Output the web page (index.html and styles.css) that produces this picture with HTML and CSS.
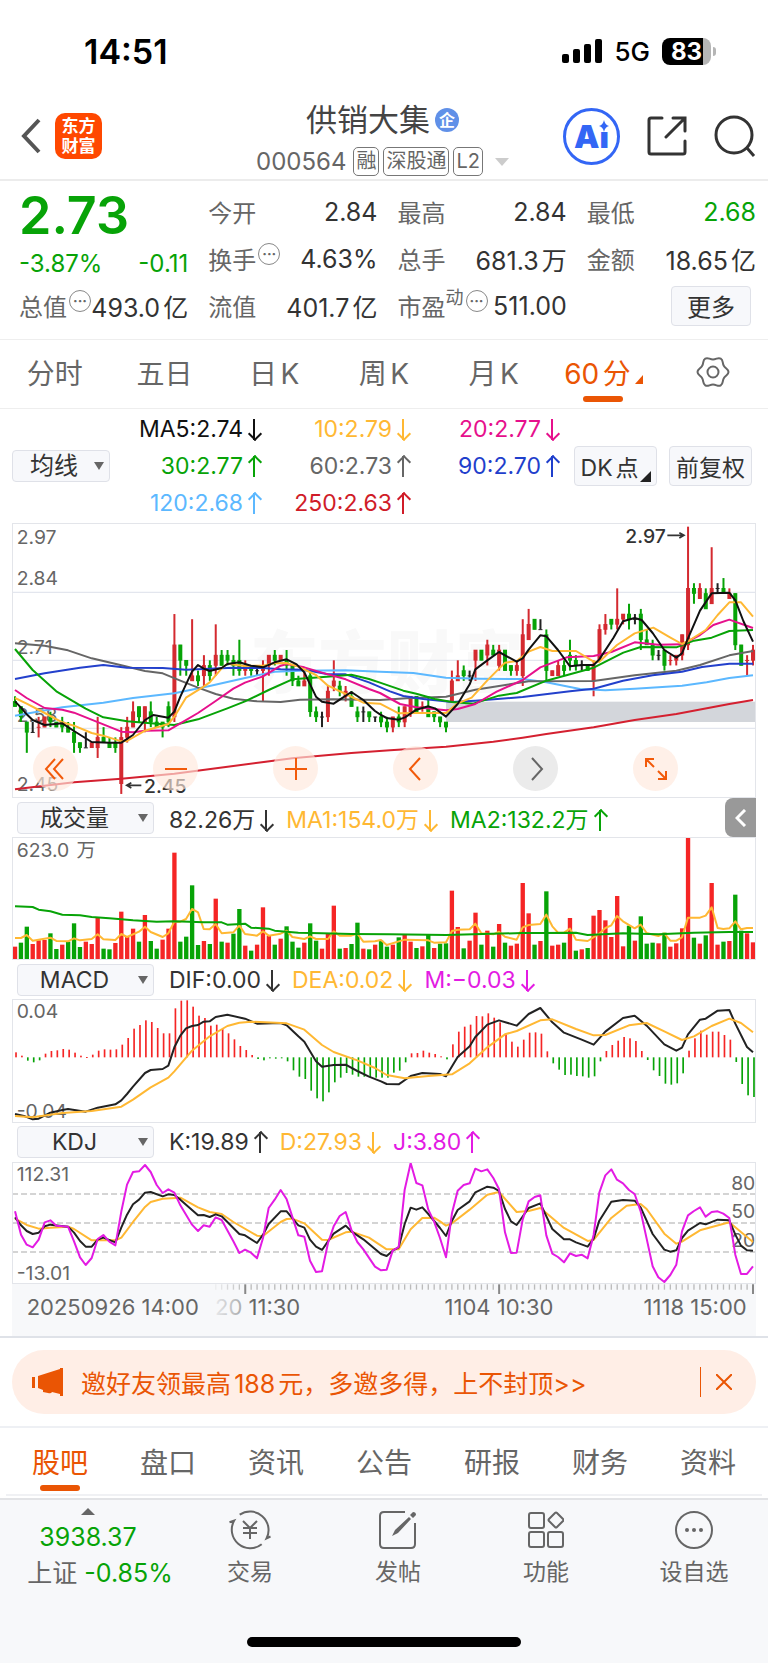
FILE: index.html
```html
<!DOCTYPE html>
<html lang="zh-CN">
<head>
    <meta charset="UTF-8">
    <meta name="viewport" content="width=device-width, initial-scale=1.0">
    <title>供销大集 000564</title>
    <link rel="stylesheet" href="styles.css">
</head>
<body>
    <div class="status-bar">
        <span class="clock">14:51</span>
        <div class="status-right">
            <svg width="40" height="26" viewBox="0 0 40 26">
                <rect x="0" y="16" width="7" height="9" rx="2"/>
                <rect x="11" y="11" width="7" height="14" rx="2"/>
                <rect x="22" y="6" width="7" height="19" rx="2"/>
                <rect x="33" y="1" width="7" height="24" rx="2"/>
            </svg>
            <span class="network">5G</span>
            <div class="battery"><span>83</span></div>
        </div>
    </div>

    <header class="header">
        <div class="header-left">
            <button class="icon-btn" aria-label="返回">
                <svg width="22" height="36" viewBox="0 0 22 36" fill="none" stroke="#555" stroke-width="4"><path d="M19 2L4 18L19 34"/></svg>
            </button>
            <a class="logo" href="#"><span>东方</span><span>财富</span></a>
        </div>
        <div class="header-title">
            <h1>供销大集<span class="badge">企</span></h1>
            <div class="code">
                <span class="code-num">000564</span>
                <span class="tag">融</span>
                <span class="tag">深股通</span>
                <span class="tag">L2</span>
                <svg class="code-arrow" width="14" height="8" viewBox="0 0 14 8"><path d="M0 0H14L7 8Z" fill="#ccc"/></svg>
            </div>
        </div>
        <div class="header-right">
            <button class="ai-btn">Ai<svg width="10" height="12" viewBox="0 0 10 12"><path d="M5 0Q6 5 10 6Q6 7 5 12Q4 7 0 6Q4 5 5 0Z" fill="#3366f5"/></svg></button>
            <button class="icon-btn" aria-label="分享">
                <svg width="40" height="42" viewBox="0 0 40 42" fill="none" stroke="#333" stroke-width="3" stroke-linecap="round"><path d="M15 3H4Q2 3 2 5V37Q2 39 4 39H36Q38 39 38 37V26"/><path d="M26 3H38V16M38 3L19 22"/></svg>
            </button>
            <button class="icon-btn" aria-label="搜索">
                <svg width="42" height="42" viewBox="0 0 42 42" fill="none" stroke="#333" stroke-width="3"><circle cx="20" cy="20" r="18"/><path d="M33 33L40 41"/></svg>
            </button>
        </div>
    </header>

    <section class="quote">
        <div class="quote-col">
            <div class="price">2.73</div>
            <div class="change"><span>-3.87%</span><span>-0.11</span></div>
            <div class="row"><label>总值<i class="more-dot">···</i></label><b>493.0亿</b></div>
        </div>
        <div class="quote-col">
            <div class="row"><label>今开</label><b>2.84</b></div>
            <div class="row"><label>换手<i class="more-dot">···</i></label><b>4.63%</b></div>
            <div class="row"><label>流值</label><b>401.7亿</b></div>
        </div>
        <div class="quote-col">
            <div class="row"><label>最高</label><b>2.84</b></div>
            <div class="row"><label>总手</label><b>681.3万</b></div>
            <div class="row"><label>市盈<sup>动</sup><i class="more-dot">···</i></label><b>511.00</b></div>
        </div>
        <div class="quote-col">
            <div class="row"><label>最低</label><b class="green">2.68</b></div>
            <div class="row"><label>金额</label><b>18.65亿</b></div>
            <div class="row end"><button class="box-btn more-btn">更多</button></div>
        </div>
    </section>

    <nav class="period-tabs">
        <button>分时</button>
        <button>五日</button>
        <button>日K</button>
        <button>周K</button>
        <button>月K</button>
        <button class="active">60分<svg class="corner" width="8" height="9" viewBox="0 0 8 9"><path d="M8 0V9H0Z" fill="#ea5504"/></svg></button>
        <button aria-label="设置">
            <svg class="gear" width="34" height="34" viewBox="0 0 34 34" fill="none" stroke="#666" stroke-width="2"><path d="M17 4.5C20.5 4.5 22 2 24.75 3.6C27.5 5.2 26.1 7.7 27.8 10.75C29.5 13.8 32.5 13.8 32.5 17C32.5 20.2 29.5 20.2 27.8 23.25C26.1 26.3 27.5 28.8 24.75 30.4C22 32 20.5 29.5 17 29.5C13.5 29.5 12 32 9.25 30.4C6.5 28.8 7.9 26.3 6.2 23.25C4.5 20.2 1.5 20.2 1.5 17C1.5 13.8 4.5 13.8 6.2 10.75C7.9 7.7 6.5 5.2 9.25 3.6C12 2 13.5 4.5 17 4.5Z"/><circle cx="17" cy="17" r="5.5"/></svg>
        </button>
    </nav>

    <section class="ma-bar">
        <div class="select small">
            <select aria-label="主图指标"><option>均线</option></select>
        </div>
        <div class="ma-values">
            <span class="c-black">MA5:2.74<i class="dn"></i></span>
            <span class="c-orange">10:2.79<i class="dn"></i></span>
            <span class="c-pink">20:2.77<i class="dn"></i></span>
            <span class="c-green">30:2.77<i class="up"></i></span>
            <span class="c-gray">60:2.73<i class="up"></i></span>
            <span class="c-blue">90:2.70<i class="up"></i></span>
            <span class="c-sky">120:2.68<i class="up"></i></span>
            <span class="c-red">250:2.63<i class="up"></i></span>
        </div>
        <div class="ma-buttons">
            <button class="box-btn dk">DK点</button>
            <button class="box-btn">前复权</button>
        </div>
    </section>

    <main class="charts">
        <div class="chart">
            <svg id="price" viewBox="36 24 2232 825"></svg>
            <div class="tools">
                <button aria-label="最左"><svg width="24" height="24" viewBox="0 0 24 24"><path d="M11 2L2 12L11 22M19 2L10 12L19 22"/></svg></button>
                <button aria-label="缩小"><svg width="24" height="24" viewBox="0 0 24 24"><path d="M1 12H23"/></svg></button>
                <button aria-label="放大"><svg width="24" height="24" viewBox="0 0 24 24"><path d="M1 12H23M12 1V23"/></svg></button>
                <button aria-label="左移"><svg width="24" height="24" viewBox="0 0 24 24"><path d="M16 1L6 12L16 23"/></svg></button>
                <button class="off" aria-label="右移"><svg width="24" height="24" viewBox="0 0 24 24"><path d="M8 1L18 12L8 23"/></svg></button>
                <button aria-label="全屏"><svg width="24" height="24" viewBox="0 0 24 24"><path d="M2 10V2H10M2 2L10 10M22 14V22H14M22 22L14 14"/></svg></button>
            </div>
        </div>

        <div class="ind-head">
            <div class="select"><select aria-label="副图一"><option>成交量</option></select></div>
            <span class="c-dark">82.26万<i class="dn"></i></span>
            <span class="c-orange">MA1:154.0万<i class="dn"></i></span>
            <span class="c-green">MA2:132.2万<i class="up"></i></span>
            <button class="side-tab" aria-label="展开"><svg width="12" height="18" viewBox="0 0 12 18" fill="none" stroke="#fff" stroke-width="3"><path d="M10 1L2 9L10 17"/></svg></button>
        </div>
        <div class="chart"><svg id="volume" viewBox="36 124 2232 370"></svg></div>

        <div class="ind-head">
            <div class="select"><select aria-label="副图二"><option>MACD</option></select></div>
            <span class="c-dark">DIF:0.00<i class="dn"></i></span>
            <span class="c-orange">DEA:0.02<i class="dn"></i></span>
            <span class="c-violet">M:−0.03<i class="dn"></i></span>
        </div>
        <div class="chart"><svg id="macd" viewBox="36 610 2232 370"></svg></div>

        <div class="ind-head">
            <div class="select"><select aria-label="副图三"><option>KDJ</option></select></div>
            <span class="c-dark">K:19.89<i class="up"></i></span>
            <span class="c-orange">D:27.93<i class="dn"></i></span>
            <span class="c-violet">J:3.80<i class="up"></i></span>
        </div>
        <div class="chart kdj"><svg id="kdj" viewBox="36 122 2232 368"></svg></div>
        <div class="axis"><svg id="axis" viewBox="36 490 2232 156"></svg></div>
    </main>

    <div class="promo-wrap">
        <div class="promo">
            <svg width="32" height="28" viewBox="0 0 32 28" fill="#ea5504"><path d="M0 9H3V20H0Z"/><path d="M6 8L28 1V0H31V28H28V26L20 24Q19 26 16 25L11 24V22L6 20Z"/></svg>
            <a href="#">邀好友领最高188元，多邀多得，上不封顶&gt;&gt;</a>
            <button class="icon-btn" aria-label="关闭"><svg width="16" height="16" viewBox="0 0 16 16" fill="none" stroke="#ea5504" stroke-width="2"><path d="M0 0L16 16M16 0L0 16"/></svg></button>
        </div>
    </div>

    <nav class="info-tabs">
        <button class="active">股吧</button>
        <button>盘口</button>
        <button>资讯</button>
        <button>公告</button>
        <button>研报</button>
        <button>财务</button>
        <button>资料</button>
    </nav>

    <footer class="bottom">
        <div class="bottom-nav">
            <a class="index" href="#">
                <svg width="14" height="7" viewBox="0 0 14 7"><path d="M7 0L14 7H0Z"/></svg>
                <span class="green">3938.37</span>
                <span class="index-name">上证 <em>-0.85%</em></span>
            </a>
            <a href="#">
                <svg width="42" height="40" viewBox="0 0 42 40"><path d="M10.7 4.7A18.5 18.5 0 0 1 37.6 28.3L41.5 26.5"/><path d="M32.7 34.3A18.5 18.5 0 0 1 5.2 10.6L0.5 12.3"/><path d="M14 11L21 18L28 11M21 18V29M14 18H28M14 23H28"/></svg>
                <span>交易</span>
            </a>
            <a href="#">
                <svg width="40" height="40" viewBox="0 0 40 40"><path d="M27 2H6Q2 2 2 6V34Q2 38 6 38H33Q37 38 37 34V13"/><path class="solid" d="M31 7L33 9L20 23L14 26L17 20ZM32 5L35 2Q38 2 38 5L35 8Z"/></svg>
                <span>发帖</span>
            </a>
            <a href="#">
                <svg width="36" height="38" viewBox="0 0 36 38"><rect x="1" y="2" width="15" height="15" rx="2"/><rect x="1" y="21" width="15" height="15" rx="2"/><rect x="20" y="21" width="15" height="15" rx="2"/><path d="M27 2Q28 1 29 2L35 8Q36 9 35 10L29 16Q28 17 27 16L21 10Q20 9 21 8Z"/></svg>
                <span>功能</span>
            </a>
            <a href="#">
                <svg width="38" height="38" viewBox="0 0 38 38"><circle cx="19" cy="19" r="18"/><g class="solid"><circle cx="12" cy="19" r="2"/><circle cx="19" cy="19" r="2"/><circle cx="26" cy="19" r="2"/></g></svg>
                <span>设自选</span>
            </a>
        </div>
        <div class="home-bar"></div>
    </footer>

    <script src="charts.js"></script>
</body>
</html>
```

FILE: styles.css
```css
* {
    box-sizing: border-box;
}
body {
    display: flex;
    flex-direction: column;
    min-height: 100vh;
    margin: 0;
    background: #fff;
    color: #333;
    font-family: Inter, "Noto Sans CJK SC", sans-serif;
    font-size: 24px;
    text-autospace: normal;
}
button, select {
    font: inherit;
    color: inherit;
    border: 0;
    padding: 0;
    margin: 0;
    background: none;
}
a {
    color: inherit;
    text-decoration: none;
}
svg {
    display: block;
}
i, em {
    font-style: normal;
}
.green, em {
    color: #07a307;
}

/* status bar */
.status-bar {
    display: flex;
    justify-content: space-between;
    align-items: center;
    height: 102px;
    padding: 0 57px 0 84px;
    color: #000;
}
.clock {
    font-size: 34px;
    font-weight: 600;
}
.status-right {
    display: flex;
    align-items: center;
    gap: 12px;
}
.network {
    font-size: 26px;
    font-weight: 500;
}
.battery {
    position: relative;
    width: 49px;
    height: 27px;
    border-radius: 8px;
    background: linear-gradient(90deg, #000 83%, #b5b5b5 83%);
    color: #fff;
    font-size: 24px;
    font-weight: 700;
    line-height: 27px;
    text-align: center;
}
.battery::after {
    content: "";
    position: absolute;
    right: -5px;
    top: 9px;
    width: 3px;
    height: 9px;
    border-radius: 0 4px 4px 0;
    background: #b5b5b5;
}

/* header */
.header {
    display: grid;
    grid-template-columns: 1fr auto 1fr;
    align-items: center;
    height: 79px;
    padding: 0 12px 10px 20px;
    border-bottom: 2px solid #ececec;
}
.header-left, .header-right {
    display: flex;
    align-items: center;
    padding-bottom: 6px;
}
.header-left {
    gap: 13px;
}
.header-right {
    justify-content: flex-end;
    gap: 27px;
}
.logo {
    display: flex;
    flex-direction: column;
    justify-content: center;
    align-items: center;
    width: 47px;
    height: 46px;
    border-radius: 10px;
    background: #ff4800;
    color: #fff;
    font-size: 17px;
    font-weight: 700;
    line-height: 20px;
}
.header-title {
    padding-right: 11px;
}
.header-title h1 {
    display: flex;
    justify-content: center;
    align-items: center;
    gap: 5px;
    margin: 0;
    font-size: 31px;
    font-weight: 400;
    line-height: 36px;
    color: #444;
}
.badge {
    width: 24px;
    height: 24px;
    border-radius: 50%;
    background: #6090e8;
    color: #fff;
    font-size: 16px;
    font-weight: 700;
    line-height: 24px;
    text-align: center;
}
.code {
    display: flex;
    align-items: center;
    gap: 4px;
    margin-top: 9px;
    color: #666;
}
.code-num {
    margin-right: 3px;
}
.tag {
    height: 29px;
    padding: 0 2px;
    border: 1px solid #777;
    border-radius: 5px;
    font-size: 20px;
    line-height: 27px;
}
.code-arrow {
    margin-left: 8px;
}
.ai-btn {
    position: relative;
    width: 57px;
    height: 57px;
    border: 3px solid #3366f5;
    border-radius: 50%;
    color: #3366f5;
    font-size: 32px;
    font-weight: 900;
    line-height: 51px;
}
.ai-btn svg {
    position: absolute;
    right: 8px;
    top: 9px;
    background: #fff;
}

/* quote */
.quote {
    display: grid;
    grid-template-columns: repeat(4, minmax(0, 1fr));
    gap: 20px;
    padding: 7px 12px 10px 19px;
    border-bottom: 1px solid #eee;
}
.row, .change {
    display: flex;
    justify-content: space-between;
    align-items: center;
    height: 47px;
    white-space: nowrap;
}
.row label {
    display: flex;
    align-items: center;
    color: #666;
}
.row b {
    font-size: 25px;
    font-weight: 400;
}
.row.end {
    justify-content: flex-end;
}
.row sup {
    align-self: flex-start;
    font-size: 18px;
    line-height: 20px;
}
.price {
    height: 56px;
    color: #07a307;
    font-size: 52px;
    font-weight: 600;
    line-height: 56px;
}
.change {
    height: 38px;
    color: #07a307;
}
.more-dot {
    align-self: flex-start;
    width: 22px;
    height: 22px;
    margin: 2px 0 0 2px;
    border: 1px solid #888;
    border-radius: 50%;
    font-size: 14px;
    font-weight: 700;
    line-height: 19px;
    text-align: center;
}
.box-btn {
    height: 40px;
    border: 1px solid #dfe1e8;
    border-radius: 4px;
    background: #f7f8fb;
}
.more-btn {
    width: 80px;
    margin-right: 5px;
}

/* period tabs */
.period-tabs {
    display: grid;
    grid-template-columns: repeat(7, 1fr);
    height: 69px;
    border-bottom: 1px solid #eee;
    color: #666;
    font-size: 28px;
}
.period-tabs button {
    padding-bottom: 4px;
}
.period-tabs button, .info-tabs button {
    position: relative;
    height: 100%;
}
.period-tabs .active, .info-tabs .active {
    color: #ea5504;
}
.active::after {
    content: "";
    position: absolute;
    left: 50%;
    bottom: 6px;
    width: 40px;
    height: 6px;
    margin-left: -20px;
    border-radius: 3px;
    background: #ea5504;
}
.info-tabs .active::after {
    bottom: 3px;
}
.corner {
    display: inline-block;
    margin-left: 4px;
}
.gear {
    margin: 0 auto;
}

/* moving averages */
.ma-bar {
    display: flex;
    align-items: center;
    height: 114px;
    padding: 0 16px 0 12px;
}
.select {
    position: relative;
    width: 137px;
}
.select.small {
    width: 98px;
}
.select select {
    width: 100%;
    height: 32px;
    padding-right: 22px;
    border: 1px solid #dfe1e8;
    border-radius: 4px;
    background: #f7f8fb;
    appearance: none;
    text-align-last: center;
    line-height: 30px;
}
.select.small select {
    padding-right: 14px;
}
.select::after {
    content: "";
    position: absolute;
    right: 6px;
    top: 12px;
    border: 5px solid transparent;
    border-top: 8px solid #666;
    border-bottom: 0;
}
.ma-values {
    flex: 1;
    display: grid;
    grid-template-columns: repeat(3, 1fr);
    font-size: 23px;
    line-height: 37px;
    text-align: right;
}
.ma-buttons {
    display: flex;
    gap: 12px;
    margin-left: 17px;
}
.ma-buttons .box-btn {
    width: 83px;
    font-size: 23px;
}
.dk {
    position: relative;
    padding-right: 12px;
}
.dk::after {
    content: "";
    position: absolute;
    right: 5px;
    bottom: 3px;
    border-left: 11px solid transparent;
    border-bottom: 11px solid #222;
}

/* thin arrows after the values */
.up, .dn {
    display: inline-block;
    position: relative;
    width: 10px;
    height: 21px;
    margin-left: 6px;
    vertical-align: -3px;
    background: linear-gradient(currentColor, currentColor) center / 2px 100% no-repeat;
}
.up::after, .dn::after {
    content: "";
    position: absolute;
    left: 1px;
    width: 8px;
    height: 8px;
    border: solid currentColor;
    transform: rotate(45deg);
}
.up::after {
    top: 1px;
    border-width: 2px 0 0 2px;
}
.dn::after {
    bottom: 1px;
    border-width: 0 2px 2px 0;
}
.c-black { color: #111; }
.c-dark { color: #333; }
.c-orange { color: #ffb833; }
.c-pink { color: #e6108c; }
.c-green { color: #07a307; }
.c-gray { color: #666; }
.c-blue { color: #1f3fcc; }
.c-sky { color: #5cb8ff; }
.c-red { color: #d01c28; }
.c-violet { color: #e31be3; }

/* charts */
.charts {
    padding: 0 12px;
    border-bottom: 2px solid #dfe2e8;
}
.chart {
    position: relative;
    outline: 1px solid #e3e5ea;
    outline-offset: -1px;
}
.chart svg, .axis svg {
    width: 100%;
    height: auto;
}
.chart text, .axis text {
    font-size: 58px;
    fill: #666;
}
.chart .note {
    fill: #333;
    font-weight: 500;
}
.chart .watermark {
    font-size: 205px;
    font-weight: 900;
    fill: #f9f9f9;
}
.axis {
    background: #f7f8fa;
}
.axis text {
    font-size: 66px;
}
.chart .tools {
    position: absolute;
    left: 21px;
    bottom: 7px;
    display: flex;
    gap: 75px;
}
.tools button {
    display: flex;
    justify-content: center;
    align-items: center;
    width: 45px;
    height: 45px;
    border-radius: 50%;
    background: rgba(255, 232, 220, 0.65);
}
.tools svg {
    width: 24px;
    fill: none;
    stroke: #f25a0a;
    stroke-width: 2;
}
.tools .off {
    background: #ebebeb;
}
.tools .off svg {
    stroke: #666;
}
.ind-head {
    position: relative;
    display: flex;
    align-items: center;
    gap: 15px;
    height: 39px;
    padding-left: 5px;
    font-size: 23px;
    text-autospace: no-autospace;
    white-space: nowrap;
}
.side-tab {
    position: absolute;
    right: 0;
    top: 0;
    display: flex;
    justify-content: center;
    align-items: center;
    width: 31px;
    height: 39px;
    border-radius: 8px 0 0 8px;
    background: #999;
}

/* promo */
.promo-wrap {
    padding: 12px;
    border-bottom: 2px solid #eef0f4;
}
.promo {
    display: flex;
    align-items: center;
    height: 64px;
    padding: 0 24px 0 20px;
    border-radius: 32px;
    background: #ffeee6;
    color: #ea5504;
}
.promo a {
    flex: 1;
    margin-left: 17px;
    font-size: 25px;
}
.promo button {
    height: 30px;
    padding-left: 15px;
    border-left: 1px solid #ea5504;
}

/* info tabs */
.info-tabs {
    display: grid;
    grid-template-columns: repeat(7, 1fr);
    height: 68px;
    margin: 0 6px;
    border-bottom: 2px solid #f0f1f4;
    color: #666;
    font-size: 28px;
}

/* bottom bar */
.bottom {
    flex: 1;
    margin-top: 2px;
    border-top: 2px solid #e2e3e6;
    background: #f7f8fa;
}
.bottom-nav {
    display: grid;
    grid-template-columns: 176px repeat(4, 1fr);
    height: 137px;
    color: #666;
}
.bottom-nav a {
    display: flex;
    flex-direction: column;
    align-items: center;
    padding-top: 10px;
    font-size: 23px;
    line-height: 34px;
}
.bottom-nav a svg {
    height: 40px;
    margin-bottom: 5px;
    fill: none;
    stroke: #666;
    stroke-width: 2;
}
.bottom-nav .solid, .bottom-nav .index svg {
    fill: #666;
    stroke: none;
}
.bottom-nav .index {
    padding: 8px 0 0;
    font-size: 25px;
    line-height: 36px;
    white-space: nowrap;
}
.bottom-nav .index svg {
    height: 7px;
    margin-bottom: 4px;
}
.bottom-nav .index-name {
    padding-left: 24px;
}
.home-bar {
    width: 274px;
    height: 10px;
    margin: 0 auto 17px;
    border-radius: 5px;
    background: #000;
}
```

FILE: charts.js
```js
const RED = '#d42a30';
const GREEN = '#07a307';
const STEP = 17.712;
const x = i => 45 + STEP * i;

// цена в центах -> y
const py = v => 35 + (297 - v) * 15.42;

// open, close, high, low
const candles = [
    [263,262,264,262],[262,260,262,259],[259,257,259,253],[257,257,259,257],[258,258,260,256,1],[258,260,260,258],
    [260,259,261,258],[259,258,259,258],[259,258,260,257],[258,257,259,257],[257,255,259,253],[255,254,255,253],
    [254,254,257,254],[254,255,255,254],[254,256,260,252],[256,255,258,255],[255,254,256,254],[255,254,256,253],
    [247,256,258,245],[256,258,260,255],[258,261,263,258],[262,260,262,259],[259,262,262,257],[261,259,263,258],
    [259,258,260,258],[259,258,259,256],[262,259,263,258],[260,274,280,259],[274,271,274,268],[271,270,271,268],
    [267,268,279,267],[268,267,269,266],[268,270,272,266],[270,268,271,267],[270,272,278,268],[272,270,273,270],
    [272,271,273,270],[271,270,272,268],[271,269,275,268],[269,270,271,268],[270,269,270,268],[269,269,270,268],
    [269,270,271,263],[270,272,272,268],[272,271,273,270],[271,272,272,271],[271,270,273,268],[270,267,270,266],
    [267,266,268,266],[266,267,269,266],[268,261,269,260],[261,260,262,259],[260,260,261,258],[260,265,266,259],
    [266,267,271,265],[266,265,267,264],[264,265,266,263],[264,262,265,262],[261,260,262,259],[261,261,262,259],
    [261,260,261,259],[260,260,260,259],[260,259,261,258],[259,258,260,257],[258,260,260,257],[260,259,262,258],
    [259,262,262,258],[261,264,264,260],[264,261,264,261],[262,262,263,261,1],[262,260,264,260],[261,260,261,259],
    [260,259,260,258],[259,258,259,257],[263,267,269,263],[267,268,271,267],[269,268,270,267],[268,268,269,267],
    [271,273,273,267],[273,271,273,271],[272,274,275,270],[273,272,274,272],[270,273,274,269],[273,269,273,269],
    [270,269,270,268],[269,270,271,268],[268,276,279,266],[275,278,281,275],[279,277,279,277],[277,277,279,277],
    [276,269,277,267],[268,269,269,268],[268,270,271,268],[270,269,271,268],[272,271,275,269],[271,270,272,269],
    [270,270,271,269],[270,269,270,269],[267,270,271,264],[271,277,278,271],[277,278,280,276],[279,278,279,277],
    [278,279,285,277],[279,280,280,278],[280,279,282,277],[279,279,280,278],[280,275,281,273],[275,274,277,274],
    [274,272,275,271],[272,272,273,271],[273,270,273,269],[271,271,272,270,1],[271,272,272,270],[272,276,276,271],
    [274,285,297,273],[285,284,286,282],[283,285,286,283],[284,281,285,281],[282,285,293,282],[285,285,286,284],
    [285,284,287,284],[283,284,285,283],[284,274,284,273],[274,270,274,270],[271,271,272,268,1],[271,273,274,270]
];

const volumes = [
    453,441,393,445,434,433,413,460,447,438,383,454,438,445,364,459,461,442,348,424,399,438,358,436,459,432,399,171,
    438,423,269,448,436,445,309,438,441,414,340,450,465,447,335,420,447,429,392,438,456,441,383,435,459,415,330,459,
    457,445,381,459,461,447,435,453,447,425,415,438,457,452,418,457,444,443,285,394,458,435,351,447,405,453,385,441,
    450,444,262,353,447,436,287,450,447,441,367,465,461,457,360,343,374,424,301,452,390,435,362,444,441,443,411,453,
    443,398,125,426,444,419,262,447,438,436,297,405,413,440
];
const volumeColors = [
    'rggrrrggrg', 'ggrrrggrrr', 'rgrggrrrgg', 'ggrgrgrggr', 'grrrgrgggr', 'ggrrrgrggr', 'grggrgrrgr',
    'grggrrgrrg', 'rgrgrrrrgr', 'grrgrgrgrr', 'rrrrgrgggr', 'grrrrgrgrr', 'grggrr'
].join('');

const macdBars = [
    770,780,795,800,794,774,766,764,760,762,771,780,784,777,765,761,762,761,747,727,699,688,674,679,697,713,713,638,
    615,614,633,660,667,690,687,700,713,731,751,763,778,790,794,787,789,788,797,824,843,850,885,908,917,890,860,846,
    832,837,843,843,844,846,846,846,831,825,800,773,772,765,771,775,782,791,746,708,693,687,661,662,653,666,680,716,
    738,753,732,711,710,714,767,803,822,838,837,841,842,846,842,797,766,748,735,724,728,736,766,793,824,841,864,867,
    863,833,765,728,705,717,708,708,718,732,799,865,899,904
];

const rect = (cx, y1, y2, w, color) =>
    `<rect x="${cx - w / 2}" y="${y1}" width="${w}" height="${Math.max(y2 - y1, 3)}" fill="${color}"/>`;
const line = (points, color, w = 6) =>
    `<polyline points="${points}" fill="none" stroke="${color}" stroke-width="${w}" stroke-linejoin="round"/>`;
const hline = (y, extra = '') =>
    `<path d="M36 ${y}H2268" stroke="#e3e6ee" stroke-width="4" ${extra}/>`;
const text = (tx, ty, s, extra = '') => `<text x="${tx}" y="${ty}" ${extra}>${s}</text>`;

function drawPrice() {
    let out = text(750, 520, '东方财富', 'class="watermark"');
    out += [232, 436, 640].map(y => hline(y)).join('');
    out += '<rect x="1338" y="560" width="930" height="61" fill="#d3d6db"/>';
    out += text(50, 88, '2.97') + text(50, 211, '2.84') + text(50, 417, '2.71') + text(50, 622, '2.58') + text(50, 827, '2.45');
    candles.forEach(([o, c, h, l, red], i) => {
        const color = red || c > o ? RED : c < o ? GREEN : '#222';
        out += rect(x(i), py(h), py(l), 6, color);
        out += rect(x(i), py(Math.max(o, c)) - 1, py(Math.min(o, c)) + 1, 12, color);
    });
    out += line('45,823 222,802 364,791 523,776 700,753 877,730 1054,714 1170,706 1338,695 1480,680 1568,668 1639,657 1781,637 1904,615 2029,597 2188,567 2259,555', '#d42030');
    out += line('45,602 187,577 310,563 399,549 523,535 629,513 735,489 824,470 900,467 1037,466 1140,470 1240,474 1338,488 1440,491 1568,492 1639,502 1740,522 1816,526 1904,521 2046,512 2120,502 2188,489 2259,481', '#5cb8ff');
    out += line('45,385 134,392 204,406 275,430 364,451 435,468 488,475 541,497 594,518 647,537 700,551 771,559 842,561 900,554 1000,553 1140,555 1220,550 1338,545 1426,524 1497,513 1586,499 1781,498 1904,481 2029,467 2100,450 2188,421 2259,408', '#666');
    out += line('45,492 134,475 240,458 310,450 381,458 488,459 558,464 700,458 789,459 842,463 913,464 984,478 1037,478 1107,502 1170,529 1210,543 1270,552 1356,561 1426,557 1568,546 1710,529 1781,521 1869,497 1958,481 2046,470 2106,456 2188,446 2259,446', '#2340cc');
    out += line('45,402 98,465 169,529 257,581 310,607 381,619 452,625 523,630 594,613 682,580 735,559 806,525 877,493 930,489 1000,484 1054,479 1107,492 1140,503 1210,527 1249,536 1305,552 1356,561 1420,566 1497,542 1550,534 1639,497 1710,478 1781,458 1870,413 1922,396 2029,397 2082,377 2135,368 2188,348 2259,345', GREEN);
    out += line('45,525 80,549 134,579 187,584 222,593 310,628 364,650 399,652 435,647 505,646 541,625 594,594 647,558 700,521 735,503 789,484 842,452 860,447 913,457 966,473 1037,493 1107,522 1140,534 1200,567 1249,577 1338,586 1373,582 1426,567 1490,530 1568,495 1621,457 1700,427 1781,423 1834,411 1904,382 1975,389 2046,388 2100,360 2140,330 2188,314 2259,339', '#e6108c');
    out += line('45,549 80,566 134,594 187,622 222,632 275,654 310,662 364,679 381,678 435,647 505,627 523,605 558,548 611,515 629,502 665,460 682,446 735,453 789,452 824,445 860,444 895,455 948,480 984,512 1037,537 1090,563 1140,566 1196,595 1249,594 1338,594 1373,565 1415,548 1462,496 1515,443 1550,438 1586,410 1621,396 1657,408 1728,408 1781,440 1798,440 1851,390 1904,355 1960,338 2010,367 2046,387 2070,375 2117,345 2153,300 2188,262 2223,262 2259,305', '#ffb833');
    out += line('45,559 63,578 80,598 98,615 134,630 187,625 222,648 275,681 328,683 364,683 399,660 435,615 460,600 505,608 523,590 541,545 558,508 576,470 594,450 611,461 629,468 665,459 682,447 718,442 753,452 789,457 824,442 860,433 890,448 913,472 948,545 966,560 1001,566 1025,550 1054,531 1090,555 1125,588 1140,598 1160,609 1196,614 1215,607 1249,584 1285,574 1305,580 1338,605 1373,567 1409,508 1426,463 1462,436 1497,411 1550,440 1568,430 1586,404 1621,361 1639,364 1674,405 1710,454 1745,450 1781,450 1798,433 1840,369 1869,319 1904,309 1925,315 1958,354 1993,405 2029,428 2046,415 2064,370 2100,287 2135,235 2188,233 2206,256 2230,318 2259,380', '#111');
    // подписи максимума и минимума
    out += text(432, 833, '2.45', 'class="note"') + '<path d="M424 811H380M394 803L380 811L394 819" fill="none" stroke="#333" stroke-width="5"/>';
    out += text(1876, 83, '2.97', 'class="note"') + '<path d="M2002 61H2052M2038 53L2052 61L2038 69" fill="none" stroke="#333" stroke-width="5"/>';
    document.getElementById('price').innerHTML = out;
}

function drawVolume() {
    let out = text(50, 184, '623.0万');
    volumes.forEach((y, i) => {
        out += rect(x(i), y, 494, 13, volumeColors[i] === 'r' ? '#f52525' : GREEN);
    });
    out += line('45,427 63,427 80,418 98,435 151,426 169,436 204,437 222,428 240,434 275,430 293,416 310,431 346,433 364,415 381,424 417,408 435,393 452,409 488,424 505,413 523,378 541,378 558,370 576,340 594,350 611,400 629,401 647,385 665,413 700,410 718,389 735,415 771,420 789,407 806,420 842,414 860,405 877,424 913,430 930,422 948,430 984,430 1001,407 1019,420 1054,420 1072,414 1090,438 1125,437 1143,433 1160,448 1214,432 1285,434 1302,441 1338,440 1356,406 1373,402 1409,401 1426,384 1444,413 1480,416 1497,408 1515,423 1550,432 1568,395 1586,388 1621,385 1639,357 1657,392 1674,411 1692,411 1710,399 1728,432 1763,436 1798,414 1816,397 1834,389 1851,361 1869,377 1904,398 1922,387 1940,412 1975,421 1993,413 2011,435 2029,435 2046,425 2064,366 2100,366 2117,360 2135,335 2153,397 2170,400 2188,398 2206,377 2223,401 2241,397 2259,397', '#ffb833');
    out += line('45,332 98,334 116,342 151,347 187,357 240,359 275,364 328,368 399,374 470,378 523,377 611,380 665,380 682,387 735,384 753,396 806,399 824,405 895,411 966,413 1054,415 1170,416 1338,418 1568,412 1621,412 1728,411 1763,418 1869,413 1975,416 2082,411 2188,409 2259,409', GREEN);
    document.getElementById('volume').innerHTML = out;
}

function drawMacd() {
    let out = text(50, 668, '0.04') + text(50, 966, '-0.04');
    macdBars.forEach((y, i) => {
        out += y < 785 ? rect(x(i) + 3, y, 785, 5, '#f52525') : rect(x(i) + 3, 785, y, 5, GREEN);
    });
    out += line('45,955 75,962 98,971 116,969 151,951 187,943 204,940 257,948 293,936 346,926 364,914 381,895 399,873 435,832 452,823 488,820 505,810 523,755 541,720 558,698 576,691 594,688 611,678 629,677 647,664 682,657 735,669 771,684 842,682 860,689 895,722 913,738 948,797 966,813 1001,808 1037,807 1072,826 1107,843 1143,857 1160,865 1196,866 1232,841 1267,832 1320,835 1338,842 1373,784 1409,752 1426,724 1462,687 1497,674 1550,690 1586,655 1621,637 1657,680 1692,711 1745,732 1781,747 1816,708 1869,667 1904,660 1940,690 1993,746 2029,765 2046,756 2064,716 2100,672 2117,669 2153,645 2188,643 2206,684 2241,754 2259,770', '#222');
    out += line('45,961 98,965 187,952 275,946 364,933 399,912 452,875 505,846 523,827 576,765 629,722 682,691 718,681 753,678 860,683 913,702 966,748 1001,769 1072,794 1125,817 1160,838 1214,848 1285,841 1356,836 1409,803 1462,755 1515,716 1550,706 1621,674 1657,671 1728,700 1781,719 1816,718 1887,689 1940,682 1993,707 2046,733 2082,722 2135,691 2188,669 2223,682 2259,710', '#ffb833');
    document.getElementById('macd').innerHTML = out;
}

function drawKdj() {
    let out = [218, 305, 392].map(y => `<path d="M36 ${y}H2268" stroke="#d4d4d4" stroke-width="6" stroke-dasharray="18 9"/>`).join('');
    out += text(50, 180, '112.31') + text(50, 477, '-13.01');
    out += text(2266, 206, '80', 'text-anchor="end"') + text(2266, 291, '50', 'text-anchor="end"') + text(2266, 377, '20', 'text-anchor="end"');
    out += line('45,292 80,311 116,322 151,319 204,316 222,323 275,357 346,357 364,349 399,302 435,257 452,242 488,232 541,229 594,258 629,272 665,278 700,302 771,343 789,344 842,302 860,293 877,292 913,306 966,355 984,356 1037,333 1054,331 1107,349 1160,384 1196,384 1232,324 1267,290 1302,289 1320,300 1338,313 1356,306 1409,265 1462,220 1497,212 1550,272 1586,269 1621,260 1692,320 1763,359 1781,356 1834,290 1880,253 1922,248 1940,263 1993,337 2029,367 2046,361 2100,327 2188,303 2223,332 2259,362', '#ffb833');
    out += line('45,288 63,312 80,329 98,338 116,334 134,315 151,310 204,316 222,334 240,359 257,376 275,376 293,355 310,349 346,363 364,318 381,280 399,249 417,235 435,214 452,212 488,225 505,219 523,221 541,235 594,282 611,281 629,287 647,279 665,285 718,338 735,342 771,365 789,340 806,308 842,270 860,270 895,312 913,319 930,355 948,376 966,386 984,360 1001,337 1037,313 1054,330 1090,354 1143,398 1160,404 1178,388 1196,378 1214,308 1232,259 1249,265 1267,258 1285,278 1320,320 1338,344 1356,298 1373,266 1409,240 1426,213 1462,196 1480,199 1497,209 1515,263 1533,300 1550,311 1586,260 1621,246 1657,323 1692,354 1710,354 1728,363 1763,376 1781,352 1798,298 1834,241 1869,236 1904,238 1922,258 1958,338 1993,385 2011,391 2029,387 2046,350 2064,328 2100,305 2117,309 2153,295 2188,297 2206,340 2223,373 2241,387 2259,388', '#222');
    out += line('45,270 63,340 80,370 98,378 116,355 134,303 151,297 169,313 204,316 222,360 240,408 257,431 275,410 293,353 310,341 328,361 346,372 364,270 381,190 399,152 417,150 435,131 452,152 470,191 488,215 505,204 523,214 541,252 576,310 594,329 611,312 629,316 647,288 665,296 700,360 718,395 735,385 753,394 771,411 789,350 806,260 824,235 842,206 860,234 895,342 913,346 930,418 948,452 966,450 984,365 1001,315 1019,284 1037,272 1054,325 1072,362 1090,384 1125,436 1143,447 1160,445 1178,388 1196,377 1214,205 1232,125 1249,185 1267,192 1285,265 1302,300 1320,350 1338,408 1356,275 1373,208 1391,191 1409,186 1426,142 1444,150 1462,144 1480,170 1497,203 1515,333 1533,395 1550,394 1568,295 1586,240 1604,227 1621,222 1639,342 1657,397 1674,407 1692,423 1710,396 1728,404 1745,400 1763,411 1781,340 1798,214 1816,162 1834,144 1851,175 1869,186 1887,206 1904,218 1922,270 1940,352 1958,435 1975,468 1993,482 2011,461 2029,430 2046,330 2064,282 2082,269 2100,258 2117,286 2135,272 2153,270 2170,277 2188,290 2206,400 2223,458 2241,458 2259,435', '#e31be3');
    document.getElementById('kdj').innerHTML = out;
}

function drawAxis() {
    let out = '<defs><linearGradient id="fade"><stop offset="0" stop-color="#666" stop-opacity="0.1"/><stop offset="0.3" stop-color="#666" stop-opacity="0.5"/><stop offset="0.45" stop-color="#666"/></linearGradient></defs>';
    for (let i = 34; i <= 125; i++) {
        const big = i === 39 || i === 82 || i === 125;
        const opacity = Math.min(1, (i - 33) / 6);
        out += `<path d="M${x(i)} 491V${big ? 520 : 507}" stroke="${big ? '#888' : '#bbb'}" stroke-width="${big ? 6 : 4}" opacity="${opacity}"/>`;
    }
    out += text(80, 583, '20250926 14:00');
    out += text(645, 583, '20 11:30', 'style="fill:url(#fade)"');
    out += text(1497, 583, '1104 10:30', 'text-anchor="middle"');
    out += text(2240, 583, '1118 15:00', 'text-anchor="end"');
    document.getElementById('axis').innerHTML = out;
}

drawPrice();
drawVolume();
drawMacd();
drawKdj();
drawAxis();
```
